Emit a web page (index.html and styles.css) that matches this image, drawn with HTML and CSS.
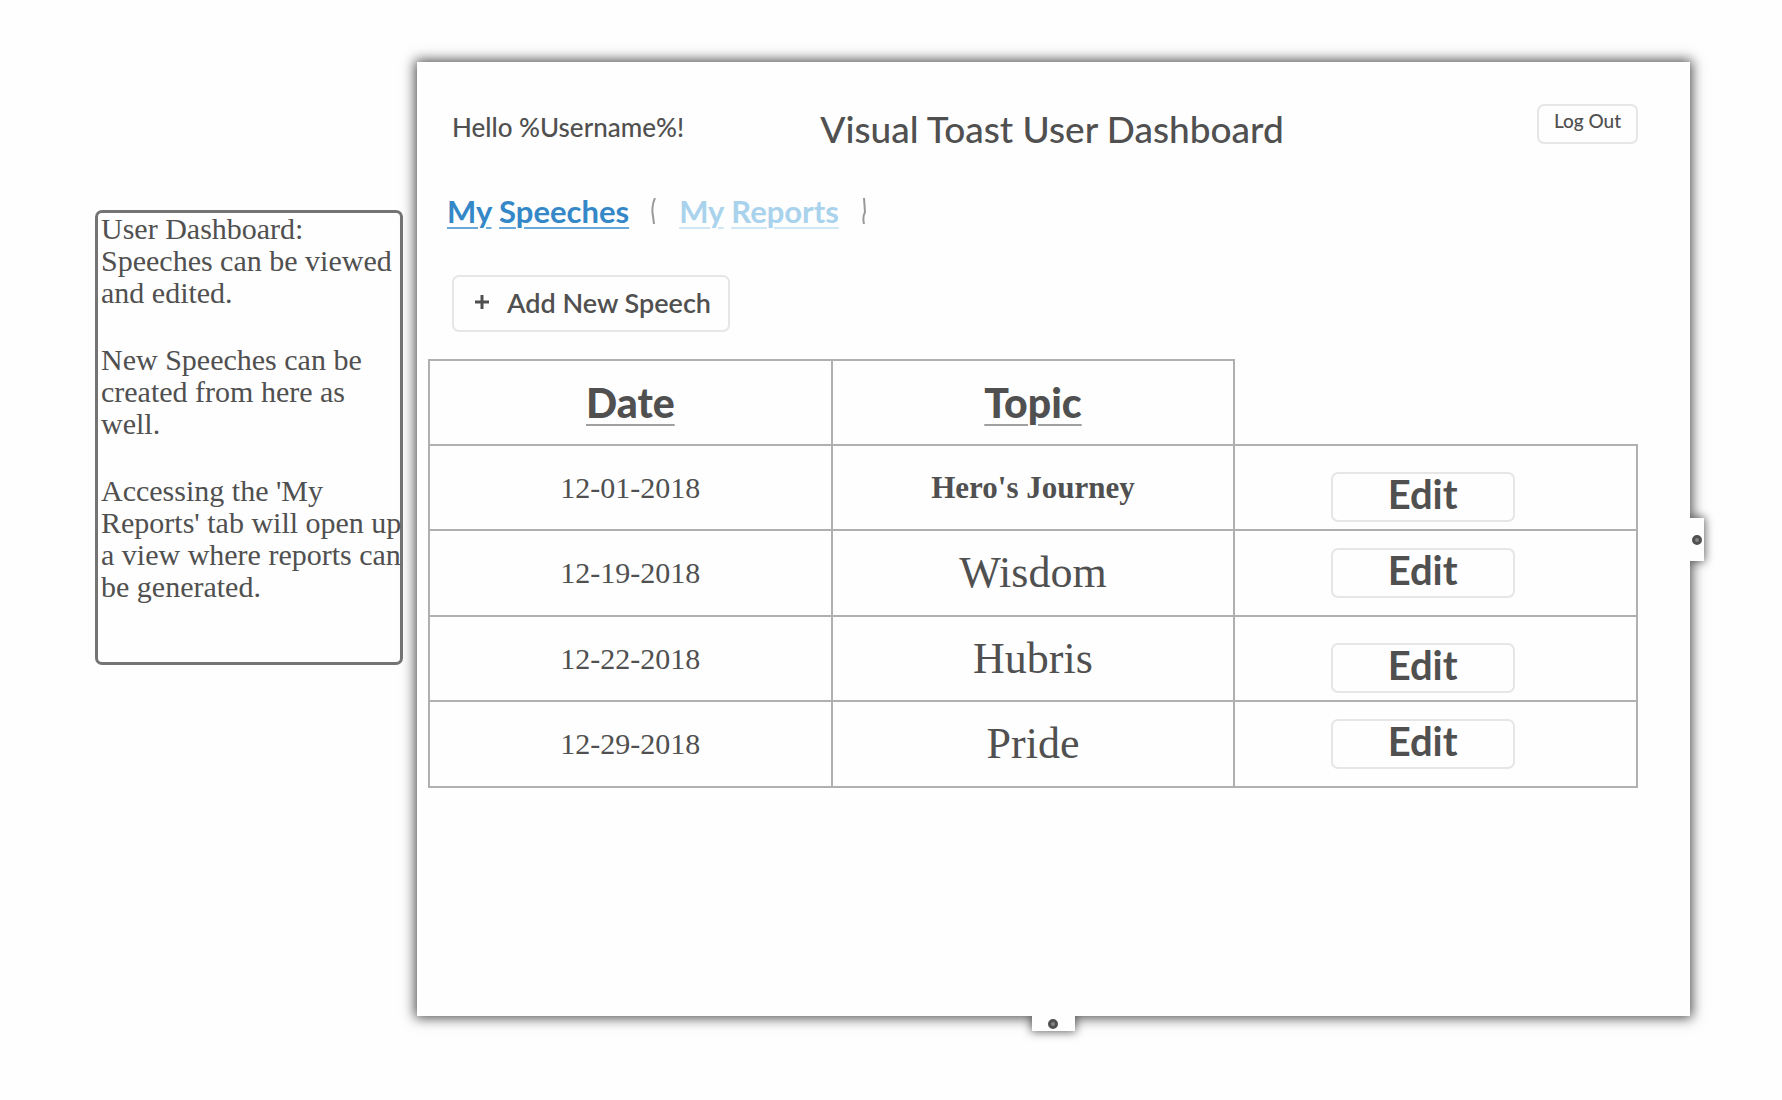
FILE: index.html
```html
<!DOCTYPE html>
<html lang="en">
<head>
<meta charset="utf-8">
<title>Visual Toast User Dashboard</title>
<link rel="stylesheet" href="styles.css">
</head>
<body>
<aside class="note">
  <p>User Dashboard:<br>Speeches can be viewed and edited.</p>
  <p>New Speeches can be created from here as well.</p>
  <p>Accessing the 'My Reports' tab will open up a view where reports can be generated.</p>
</aside>
<main class="panel">
  <header class="header">
    <span class="greeting">Hello %Username%!</span>
    <h1 class="title">Visual Toast User Dashboard</h1>
    <button class="button logout" type="button">Log Out</button>
  </header>
  <nav class="tabs">
    <a class="tab active" href="#speeches"><span>My</span> <span>Speeches</span></a>
    <svg class="divider" width="6" height="26" viewBox="0 0 6 26"><path d="M4 0C1 6 1 14 2 18L3 26"/></svg>
    <a class="tab" href="#reports"><span>My</span> <span>Reports</span></a>
    <svg class="divider" width="6" height="26" viewBox="0 0 6 26"><path d="M3 0L4 14C2 18 2 22 3 26"/></svg>
  </nav>
  <button class="button add" type="button"><svg width="14" height="14" viewBox="0 0 14 14"><path d="M0 7H14M7 0V14"/></svg>Add New Speech</button>
  <table class="speeches">
    <thead>
      <tr><th>Date</th><th>Topic</th><td class="blank"></td></tr>
    </thead>
    <tbody>
      <tr><td>12-01-2018</td><td class="current">Hero's Journey</td><td class="action"><button class="button edit" type="button">Edit</button></td></tr>
      <tr><td>12-19-2018</td><td class="topic">Wisdom</td><td class="action"><button class="button edit" type="button">Edit</button></td></tr>
      <tr><td>12-22-2018</td><td class="topic">Hubris</td><td class="action"><button class="button edit" type="button">Edit</button></td></tr>
      <tr><td>12-29-2018</td><td class="topic">Pride</td><td class="action"><button class="button edit" type="button">Edit</button></td></tr>
    </tbody>
  </table>
  <span class="handle handle-right"></span>
  <span class="handle handle-bottom"></span>
</main>
</body>
</html>
```
FILE: styles.css
```css
*,
*::after {
  box-sizing: border-box;
}

body {
  margin: 0;
  min-height: 100vh;
  padding: 62px 92px 84px 95px;
  display: grid;
  grid-template-columns: 308px 1fr;
  gap: 14px;
  background: #fefefe;
  color: #505050;
  font-family: "Liberation Serif", serif;
  font-size: 30px;
  line-height: 32px;
}

.note {
  align-self: start;
  margin-top: 148px;
  padding: 0 0 59px 3px;
  border: 3px solid #747474;
  border-radius: 7px;
}

/* Long lines may run up to the note's border */
.note p {
  margin: 0 -6px 35px 0;
}

.note p:last-child {
  margin-bottom: 0;
}

.panel {
  position: relative;
  padding: 42px 52px 42px 11px;
  background: #fefefe;
  box-shadow: 0 0 12px 2px rgba(0, 0, 0, 0.7);
}

.header {
  display: grid;
  grid-template-columns: 1fr auto 1fr;
  align-items: center;
  padding-left: 24px;
  height: 50px;
}

.greeting,
.title,
.tab,
.button,
th {
  font-family: Lato, sans-serif;
}

.greeting {
  padding-bottom: 4px;
  font-size: 26px;
  font-weight: 500;
}

.title {
  margin: 0;
  padding-left: 14px;
  font-size: 37px;
  font-weight: 500;
  line-height: 44px;
}

.button {
  border: 2px solid #e6e6e6;
  border-radius: 7px;
  padding: 0;
  background: #fefefe;
  color: #505050;
}

.logout {
  justify-self: end;
  align-self: start;
  width: 101px;
  height: 40px;
  padding-bottom: 8px;
  font-size: 19px;
  font-weight: 500;
}

.tabs {
  display: flex;
  align-items: center;
  gap: 22px;
  margin-top: 35px;
  padding-left: 19px;
  height: 44px;
}

.tab {
  color: #a9d2ec;
  font-size: 31px;
  font-weight: 700;
  line-height: 40px;
  text-decoration: none;
}

.tab span {
  text-decoration: underline;
  text-decoration-thickness: 2px;
  text-underline-offset: 4px;
  text-decoration-color: #cfe6f5;
}

.tab.active {
  color: #3488c8;
}

.tab.active span {
  text-decoration-color: #6aaada;
}

.divider {
  fill: none;
  stroke: #999;
  stroke-width: 2;
}

.add {
  display: flex;
  align-items: center;
  gap: 18px;
  width: 278px;
  height: 57px;
  margin: 42px 0 27px 24px;
  padding: 0 0 3px 21px;
  font-size: 27px;
  font-weight: 600;
}

.add svg {
  fill: none;
  stroke: #505050;
  stroke-width: 3;
}

.speeches {
  width: 100%;
  table-layout: fixed;
  border-collapse: collapse;
  text-align: center;
}

.speeches tr {
  height: 85px;
}

.speeches tbody tr:nth-child(even) {
  height: 86px;
}

.speeches th,
.speeches td {
  border: 2px solid #b0b0b0;
  padding: 0;
}

.speeches th {
  font-size: 41px;
  font-weight: 900;
  text-decoration: underline;
  text-decoration-thickness: 2px;
  text-decoration-color: #a0a0a0;
  text-underline-offset: 6px;
}

.speeches td.blank {
  border-top: 0;
  border-right: 0;
}

.speeches .current {
  font-size: 31px;
  font-weight: 700;
}

.speeches .topic {
  font-size: 44px;
}

.speeches .action {
  padding-right: 26px;
  line-height: 0;
}

.speeches tr:nth-child(odd) .action {
  padding-top: 18px;
}

.edit {
  width: 184px;
  height: 50px;
  padding-bottom: 6px;
  font-size: 40px;
  font-weight: 700;
  line-height: 40px;
}

/* Resize grips on the panel's outer edges */
.handle {
  position: absolute;
  display: grid;
  place-items: center;
  background: #fefefe;
  box-shadow: 0 0 10px 1px rgba(0, 0, 0, 0.6);
}

.handle::after {
  content: "";
  width: 10px;
  height: 10px;
  border: 3px solid #505050;
  border-radius: 50%;
  background: #858585;
}

.handle-right {
  left: 100%;
  top: calc(50% - 21px);
  width: 14px;
  height: 43px;
  clip-path: inset(-16px -16px -16px 0);
}

.handle-bottom {
  top: 100%;
  left: calc(50% - 22px);
  width: 43px;
  height: 15px;
  clip-path: inset(0 -16px -16px -16px);
}
```
